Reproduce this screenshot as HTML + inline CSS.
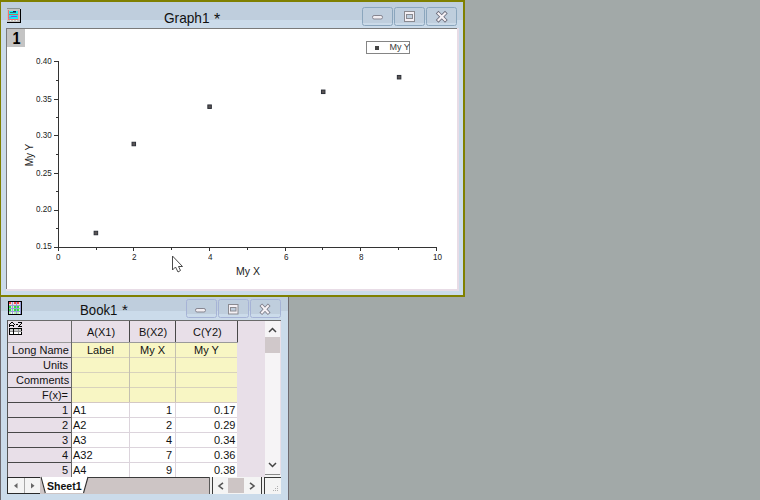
<!DOCTYPE html>
<html><head><meta charset="utf-8">
<style>
*{margin:0;padding:0;box-sizing:border-box}
html,body{width:760px;height:500px;overflow:hidden;background:#a2a9a8;font-family:"Liberation Sans",sans-serif;position:relative}
.a{position:absolute}
.t{position:absolute;white-space:nowrap;line-height:1}
</style></head><body>

<!-- ============ GRAPH WINDOW ============ -->
<div class="a" style="left:0;top:0;width:465px;height:297px;background:#808000"></div>
<div class="a" style="left:1px;top:2px;width:462px;height:293px;background:#cbdbea"></div>
<div class="a" style="left:1px;top:2px;width:462px;height:18px;background:#bfcedd"></div>
<!-- icon -->
<svg class="a" style="left:7px;top:8px" width="15" height="15" shape-rendering="crispEdges">
<rect x="0" y="0" width="13" height="14" fill="#c4c4c4"/>
<rect x="0" y="0" width="13" height="1" fill="#8a9494"/>
<rect x="1" y="2" width="1" height="10" fill="#f07070"/>
<rect x="1" y="11" width="11" height="1" fill="#f07070"/>
<rect x="11" y="2" width="1" height="10" fill="#e8a0a0"/>
<rect x="2" y="3" width="9" height="3" fill="#10f0f0"/>
<rect x="2" y="6" width="9" height="1" fill="#c07060"/>
<rect x="2" y="7" width="9" height="4" fill="#10f0f0"/>
<rect x="3" y="4" width="6" height="1" fill="#207878"/><rect x="6" y="3" width="3" height="1" fill="#102060"/>
<rect x="4" y="8" width="6" height="1" fill="#8040f0"/><rect x="2" y="9" width="2" height="1" fill="#a060f0"/>
<rect x="3" y="12" width="1" height="1" fill="#f8f8f8"/><rect x="6" y="12" width="1" height="1" fill="#f8f8e0"/><rect x="9" y="12" width="1" height="1" fill="#f8f8f8"/>
<rect x="13" y="1" width="1" height="14" fill="#000"/>
<rect x="0" y="14" width="14" height="1" fill="#000"/>
</svg>
<div class="t" style="left:164px;top:10px;font-size:15px;color:#101010;transform:scaleX(0.91);transform-origin:0 0">Graph1</div><div class="t" style="left:214px;top:11.5px;font-size:16px;color:#101010">*</div>
<!-- buttons -->
<svg class="a" style="left:0;top:0" width="465" height="30">
<rect x="363" y="8" width="29" height="15" fill="#bfcedd"/>
<rect x="395" y="8" width="29" height="15" fill="#bfcedd"/>
<rect x="427" y="8" width="29" height="15" fill="#bfcedd"/>
<rect x="363" y="23" width="29" height="2" fill="#cbdae8"/>
<rect x="395" y="23" width="29" height="2" fill="#cbdae8"/>
<rect x="427" y="23" width="29" height="2" fill="#cbdae8"/>
<g fill="none" stroke="#8ba6bd"><rect x="362.5" y="7.5" width="30" height="18" rx="2"/><rect x="394.5" y="7.5" width="30" height="18" rx="2"/><rect x="426.5" y="7.5" width="30" height="18" rx="2"/></g>
<rect x="372.5" y="15.5" width="10" height="3.5" rx="1.6" fill="#f2eef2" stroke="#858590"/>
<rect x="404.5" y="11.5" width="10" height="10" fill="#f4f0f4" stroke="#8a8a90"/>
<rect x="406.5" y="14.5" width="6" height="4" fill="#bfcedd" stroke="#8a8a90"/>
<path d="M438.5 13.5L445 20M445 13.5L438.5 20" stroke="#6a6a78" stroke-width="3.8" stroke-linecap="square"/>
<path d="M438.5 13.5L445 20M445 13.5L438.5 20" stroke="#f6f2f6" stroke-width="2.2" stroke-linecap="square"/>
</svg>

<!-- page -->
<div class="a" style="left:6px;top:28px;width:453px;height:263px;background:#e8dce6"></div>
<div class="a" style="left:6px;top:28px;width:451px;height:261px;background:#7a7a7a"></div>
<div class="a" style="left:7px;top:29px;width:450px;height:260px;background:#fff"></div>
<div class="a" style="left:7px;top:29px;width:18px;height:18px;background:#c4c4c4"></div>
<div class="t" style="left:12px;top:31px;font-size:16px;font-weight:bold;color:#000;transform:scaleX(0.9)">1</div>

<!-- plot -->
<svg class="a" style="left:0;top:0" width="465" height="297">
<g stroke="#333" stroke-width="1" shape-rendering="crispEdges">
<path d="M58.5 61V248M58 247.5H437"/>
<path d="M54 61.5H58M54 99.5H58M54 135.5H58M54 173.5H58M54 210.5H58M54 247.5H58"/>
<path d="M56 80.5H58M56 117.5H58M56 154.5H58M56 191.5H58M56 228.5H58"/>
<path d="M58.5 248V251M133.5 248V251M209.5 248V251M285.5 248V251M360.5 248V251M436.5 248V251"/>
<path d="M96.5 248V249.6M171.5 248V249.6M247.5 248V249.6M322.5 248V249.6M398.5 248V249.6"/>
</g>
<g fill="#5a5454" stroke="#2c3038" stroke-width="1"><rect x="94.15" y="231.25" width="3.5" height="3.5"/><rect x="132.05" y="142.25" width="3.5" height="3.5"/><rect x="207.85" y="104.95" width="3.5" height="3.5"/><rect x="321.45" y="90.05" width="3.5" height="3.5"/><rect x="397.35" y="75.45" width="3.5" height="3.5"/></g>
<rect x="366.5" y="41.5" width="43" height="12" fill="#fff" stroke="#858585"/>
<rect x="375" y="46" width="4" height="4" fill="#464646"/>
</svg>
<div class="t" style="left:389.5px;top:43px;font-size:9px;color:#3a3a3a">My Y</div>
<div class="t" style="left:36px;top:57px;font-size:9px;color:#222;transform:scaleX(0.9);transform-origin:0 0">0.40</div>
<div class="t" style="left:36px;top:94.5px;font-size:9px;color:#222;transform:scaleX(0.9);transform-origin:0 0">0.35</div>
<div class="t" style="left:36px;top:131px;font-size:9px;color:#222;transform:scaleX(0.9);transform-origin:0 0">0.30</div>
<div class="t" style="left:36px;top:169px;font-size:9px;color:#222;transform:scaleX(0.9);transform-origin:0 0">0.25</div>
<div class="t" style="left:36px;top:205px;font-size:9px;color:#222;transform:scaleX(0.9);transform-origin:0 0">0.20</div>
<div class="t" style="left:36px;top:242px;font-size:9px;color:#222;transform:scaleX(0.9);transform-origin:0 0">0.15</div>
<div class="t" style="left:55.5px;top:252.5px;font-size:9px;color:#222;transform:scaleX(0.9);transform-origin:0 0">0</div>
<div class="t" style="left:131.5px;top:252.5px;font-size:9px;color:#222;transform:scaleX(0.9);transform-origin:0 0">2</div>
<div class="t" style="left:207.5px;top:252.5px;font-size:9px;color:#222;transform:scaleX(0.9);transform-origin:0 0">4</div>
<div class="t" style="left:283.5px;top:252.5px;font-size:9px;color:#222;transform:scaleX(0.9);transform-origin:0 0">6</div>
<div class="t" style="left:359px;top:252.5px;font-size:9px;color:#222;transform:scaleX(0.9);transform-origin:0 0">8</div>
<div class="t" style="left:432.5px;top:252.5px;font-size:9px;color:#222;transform:scaleX(0.9);transform-origin:0 0">10</div>
<div class="t" style="left:236px;top:266px;font-size:10.5px;color:#222">My X</div>
<div class="t" style="left:19px;top:150px;font-size:10px;color:#222;transform:rotate(-90deg)">My Y</div>

<svg class="a" style="left:160px;top:250px" width="30" height="30"><path d="M12.5 6V20L15.5 17L18 22L20.5 20.5L18.5 16.5H22.5Z" fill="#fff" stroke="#4a4a4a" stroke-width="1" stroke-linejoin="miter"/></svg>

<!-- ============ BOOK WINDOW ============ -->
<div class="a" style="left:0;top:297px;width:289px;height:203px;background:#6e6a70"></div>
<div class="a" style="left:1px;top:297px;width:287px;height:203px;background:#cbdbea"></div>
<div class="a" style="left:1px;top:297px;width:287px;height:14px;background:#bfcedd"></div>
<div class="t" style="left:80px;top:302px;font-size:15px;color:#101010;transform:scaleX(0.88);transform-origin:0 0">Book1</div><div class="t" style="left:122px;top:302px;font-size:15px;color:#101010">*</div>


<!-- book icon -->
<svg class="a" style="left:8px;top:301px" width="15" height="15" shape-rendering="crispEdges"><rect x="0" y="0" width="14" height="14" fill="#000"/><rect x="1" y="1" width="12" height="12" fill="#98a0d8"/><rect x="1" y="1" width="3" height="3" fill="#f8d8d8"/><rect x="1" y="1" width="2" height="2" fill="#f04848"/><rect x="1" y="5" width="3" height="2" fill="#d0f4d0"/><rect x="1" y="5" width="2" height="2" fill="#30e040"/><rect x="1" y="8" width="3" height="2" fill="#d0f4d0"/><rect x="1" y="8" width="2" height="2" fill="#30e040"/><rect x="1" y="11" width="3" height="2" fill="#f0fcf0"/><rect x="1" y="11" width="2" height="2" fill="#b8f0b0"/><rect x="5" y="1" width="3" height="3" fill="#f8d8d8"/><rect x="6" y="1" width="2" height="2" fill="#f04848"/><rect x="5" y="5" width="3" height="2" fill="#d0f4d0"/><rect x="6" y="5" width="2" height="2" fill="#30e040"/><rect x="5" y="8" width="3" height="2" fill="#d0f4d0"/><rect x="6" y="8" width="2" height="2" fill="#30e040"/><rect x="5" y="11" width="3" height="2" fill="#f0fcf0"/><rect x="6" y="11" width="2" height="2" fill="#b8f0b0"/><rect x="9" y="1" width="3" height="3" fill="#f8d8d8"/><rect x="9" y="1" width="2" height="2" fill="#f04848"/><rect x="9" y="5" width="3" height="2" fill="#d0f4d0"/><rect x="9" y="5" width="2" height="2" fill="#30e040"/><rect x="9" y="8" width="3" height="2" fill="#d0f4d0"/><rect x="9" y="8" width="2" height="2" fill="#30e040"/><rect x="9" y="11" width="3" height="2" fill="#f0fcf0"/><rect x="9" y="11" width="2" height="2" fill="#b8f0b0"/><rect x="13" y="0" width="1" height="14" fill="#000"/></svg>
<!-- book buttons -->
<svg class="a" style="left:0;top:290px" width="289" height="30">
<rect x="187" y="10" width="29" height="14" fill="#bfcedd"/><rect x="219" y="10" width="29" height="14" fill="#bfcedd"/><rect x="251" y="10" width="29" height="14" fill="#bfcedd"/>
<g fill="none" stroke="#a6b3d6"><rect x="186.5" y="9.5" width="30" height="18" rx="2"/><rect x="218.5" y="9.5" width="30" height="18" rx="2"/><rect x="250.5" y="9.5" width="30" height="18" rx="2"/></g>
<rect x="195.5" y="18.5" width="10" height="3.5" rx="1.6" fill="#f2eef2" stroke="#858590"/>
<rect x="228.5" y="14.5" width="9.5" height="9.5" fill="#f4f0f4" stroke="#8a8a90"/>
<rect x="230.5" y="17.5" width="5.5" height="3.5" fill="#bfcedd" stroke="#8a8a90"/>
<path d="M262 16L268 22.5M268 16L262 22.5" stroke="#7a7a86" stroke-width="3.6" stroke-linecap="square"/>
<path d="M262 16L268 22.5M268 16L262 22.5" stroke="#f6f2f6" stroke-width="2" stroke-linecap="square"/>
</svg>

<!-- sheet area -->
<div class="a" style="left:7px;top:320px;width:274px;height:1px;background:#6a6a6a"></div>
<div class="a" style="left:7px;top:320px;width:1px;height:174px;background:#555"></div>
<div class="a" style="left:8px;top:321px;width:273px;height:156px;background:#e8dfe8"></div>
<!-- yellow metadata -->
<div class="a" style="left:72px;top:343px;width:165px;height:59px;background:#f8f6c4"></div>
<!-- white data -->
<div class="a" style="left:72px;top:403px;width:165px;height:74px;background:#fff"></div>
<svg class="a" style="left:0;top:0" width="289" height="500" shape-rendering="crispEdges">
<g stroke="#d8d2bc"><path d="M72 357.5H237M72 372.5H237M72 387.5H237"/></g>
<g stroke="#d4c8c4"><path d="M72 402.5H237"/></g>
<g stroke="#dcd4dc"><path d="M72 417.5H237M72 432.5H237M72 447.5H237M72 462.5H237M72 477.5H237"/></g>
<g stroke="#c4c0b0"><path d="M129.5 343V402M175.5 343V402"/></g>
<g stroke="#dcd4dc"><path d="M129.5 403V477M175.5 403V477"/></g>
<g stroke="#9a9a9a"><path d="M8 342.5H238"/></g><g stroke="#686868"><path d="M71.5 321V477"/></g><g stroke="#484848"><path d="M129.5 321V342M175.5 321V342M237.5 321V342"/>
<path d="M8 357.5H71M8 372.5H71M8 387.5H71M8 402.5H71M8 417.5H71M8 432.5H71M8 447.5H71M8 462.5H71M8 477.5H71"/></g>
</svg>
<!-- A-Z icon -->
<svg class="a" style="left:9px;top:322px" width="14" height="13" shape-rendering="crispEdges"><rect x="1" y="7" width="11" height="2" fill="#c8c8c8"/><rect x="1" y="10" width="11" height="2" fill="#fff"/><rect x="2" y="0" width="1" height="1" fill="#000"/><rect x="3" y="0" width="1" height="1" fill="#000"/><rect x="9" y="0" width="1" height="1" fill="#000"/><rect x="10" y="0" width="1" height="1" fill="#000"/><rect x="11" y="0" width="1" height="1" fill="#000"/><rect x="12" y="0" width="1" height="1" fill="#000"/><rect x="1" y="1" width="1" height="1" fill="#000"/><rect x="4" y="1" width="1" height="1" fill="#000"/><rect x="12" y="1" width="1" height="1" fill="#000"/><rect x="0" y="2" width="1" height="1" fill="#000"/><rect x="5" y="2" width="1" height="1" fill="#000"/><rect x="7" y="2" width="1" height="1" fill="#000"/><rect x="8" y="2" width="1" height="1" fill="#000"/><rect x="11" y="2" width="1" height="1" fill="#000"/><rect x="0" y="3" width="1" height="1" fill="#000"/><rect x="1" y="3" width="1" height="1" fill="#000"/><rect x="2" y="3" width="1" height="1" fill="#000"/><rect x="3" y="3" width="1" height="1" fill="#000"/><rect x="4" y="3" width="1" height="1" fill="#000"/><rect x="10" y="3" width="1" height="1" fill="#000"/><rect x="0" y="4" width="1" height="1" fill="#000"/><rect x="4" y="4" width="1" height="1" fill="#000"/><rect x="9" y="4" width="1" height="1" fill="#000"/><rect x="10" y="4" width="1" height="1" fill="#000"/><rect x="11" y="4" width="1" height="1" fill="#000"/><rect x="12" y="4" width="1" height="1" fill="#000"/><rect x="0" y="6" width="1" height="1" fill="#000"/><rect x="1" y="6" width="1" height="1" fill="#000"/><rect x="2" y="6" width="1" height="1" fill="#000"/><rect x="3" y="6" width="1" height="1" fill="#000"/><rect x="4" y="6" width="1" height="1" fill="#000"/><rect x="5" y="6" width="1" height="1" fill="#000"/><rect x="6" y="6" width="1" height="1" fill="#000"/><rect x="7" y="6" width="1" height="1" fill="#000"/><rect x="8" y="6" width="1" height="1" fill="#000"/><rect x="9" y="6" width="1" height="1" fill="#000"/><rect x="10" y="6" width="1" height="1" fill="#000"/><rect x="11" y="6" width="1" height="1" fill="#000"/><rect x="12" y="6" width="1" height="1" fill="#000"/><rect x="0" y="7" width="1" height="1" fill="#000"/><rect x="4" y="7" width="1" height="1" fill="#000"/><rect x="9" y="7" width="1" height="1" fill="#909090"/><rect x="12" y="7" width="1" height="1" fill="#000"/><rect x="0" y="8" width="1" height="1" fill="#000"/><rect x="4" y="8" width="1" height="1" fill="#000"/><rect x="9" y="8" width="1" height="1" fill="#909090"/><rect x="12" y="8" width="1" height="1" fill="#000"/><rect x="0" y="9" width="1" height="1" fill="#000"/><rect x="1" y="9" width="1" height="1" fill="#909090"/><rect x="2" y="9" width="1" height="1" fill="#909090"/><rect x="3" y="9" width="1" height="1" fill="#909090"/><rect x="4" y="9" width="1" height="1" fill="#000"/><rect x="5" y="9" width="1" height="1" fill="#909090"/><rect x="6" y="9" width="1" height="1" fill="#909090"/><rect x="7" y="9" width="1" height="1" fill="#909090"/><rect x="8" y="9" width="1" height="1" fill="#909090"/><rect x="9" y="9" width="1" height="1" fill="#909090"/><rect x="10" y="9" width="1" height="1" fill="#909090"/><rect x="11" y="9" width="1" height="1" fill="#909090"/><rect x="12" y="9" width="1" height="1" fill="#909090"/><rect x="0" y="10" width="1" height="1" fill="#000"/><rect x="4" y="10" width="1" height="1" fill="#000"/><rect x="9" y="10" width="1" height="1" fill="#909090"/><rect x="12" y="10" width="1" height="1" fill="#000"/><rect x="0" y="11" width="1" height="1" fill="#000"/><rect x="4" y="11" width="1" height="1" fill="#000"/><rect x="9" y="11" width="1" height="1" fill="#909090"/><rect x="12" y="11" width="1" height="1" fill="#000"/><rect x="0" y="12" width="1" height="1" fill="#000"/><rect x="1" y="12" width="1" height="1" fill="#000"/><rect x="2" y="12" width="1" height="1" fill="#000"/><rect x="3" y="12" width="1" height="1" fill="#000"/><rect x="4" y="12" width="1" height="1" fill="#000"/><rect x="5" y="12" width="1" height="1" fill="#000"/><rect x="6" y="12" width="1" height="1" fill="#000"/><rect x="7" y="12" width="1" height="1" fill="#000"/><rect x="8" y="12" width="1" height="1" fill="#000"/><rect x="9" y="12" width="1" height="1" fill="#000"/><rect x="10" y="12" width="1" height="1" fill="#000"/><rect x="11" y="12" width="1" height="1" fill="#000"/><rect x="12" y="12" width="1" height="1" fill="#000"/></svg>
<div class="t" style="left:87px;top:327px;font-size:11px;color:#111">A(X1)</div>
<div class="t" style="left:139px;top:327px;font-size:11px;color:#111">B(X2)</div>
<div class="t" style="left:193px;top:327px;font-size:11px;color:#111">C(Y2)</div>
<div class="t" style="left:12px;top:345px;font-size:11px;color:#111">Long Name</div>
<div class="t" style="left:43px;top:360px;font-size:11px;color:#111">Units</div>
<div class="t" style="left:16px;top:375px;font-size:11px;color:#111">Comments</div>
<div class="t" style="left:42px;top:390px;font-size:11px;color:#111">F(x)=</div>
<div class="t" style="left:87px;top:345px;font-size:11px;color:#111">Label</div>
<div class="t" style="left:140px;top:345px;font-size:11px;color:#111">My X</div>
<div class="t" style="left:194px;top:345px;font-size:11px;color:#111">My Y</div>
<div class="t" style="left:62px;top:405px;font-size:11px;color:#111">1</div>
<div class="t" style="left:62px;top:420px;font-size:11px;color:#111">2</div>
<div class="t" style="left:62px;top:435px;font-size:11px;color:#111">3</div>
<div class="t" style="left:62px;top:450px;font-size:11px;color:#111">4</div>
<div class="t" style="left:62px;top:465px;font-size:11px;color:#111">5</div>
<div class="t" style="left:73px;top:405px;font-size:11px;color:#111">A1</div>
<div class="t" style="left:73px;top:420px;font-size:11px;color:#111">A2</div>
<div class="t" style="left:73px;top:435px;font-size:11px;color:#111">A3</div>
<div class="t" style="left:73px;top:450px;font-size:11px;color:#111">A32</div>
<div class="t" style="left:73px;top:465px;font-size:11px;color:#111">A4</div>
<div class="t" style="left:166px;top:405px;font-size:11px;color:#111">1</div>
<div class="t" style="left:166px;top:420px;font-size:11px;color:#111">2</div>
<div class="t" style="left:166px;top:435px;font-size:11px;color:#111">4</div>
<div class="t" style="left:166px;top:450px;font-size:11px;color:#111">7</div>
<div class="t" style="left:166px;top:465px;font-size:11px;color:#111">9</div>
<div class="t" style="left:214px;top:405px;font-size:11px;color:#111">0.17</div>
<div class="t" style="left:214px;top:420px;font-size:11px;color:#111">0.29</div>
<div class="t" style="left:214px;top:435px;font-size:11px;color:#111">0.34</div>
<div class="t" style="left:214px;top:450px;font-size:11px;color:#111">0.36</div>
<div class="t" style="left:214px;top:465px;font-size:11px;color:#111">0.38</div>

<!-- vertical scrollbar -->
<div class="a" style="left:265px;top:321px;width:15px;height:153px;background:#f6f4f6"></div>
<div class="a" style="left:265px;top:474px;width:15px;height:1px;background:#8a8a8a"></div>
<div class="a" style="left:265px;top:475px;width:16px;height:2px;background:#f4f4f4"></div>
<div class="a" style="left:265px;top:337px;width:15px;height:16px;background:#d0c8ca"></div>
<svg class="a" style="left:265px;top:321px" width="15" height="153"><path d="M4 11L7.5 7.5L11 11" stroke="#444" stroke-width="1.5" fill="none"/><path d="M4 142L7.5 145.5L11 142" stroke="#444" stroke-width="1.5" fill="none"/></svg>
<!-- tab bar -->
<svg class="a" style="left:0;top:470px" width="289" height="30" shape-rendering="crispEdges">
<rect x="7" y="7" width="274" height="17" fill="#cbdbea"/>
<rect x="7" y="7" width="34" height="17" fill="#2a2a2a"/>
<rect x="8" y="8" width="16" height="15" fill="#f4f4f4"/>
<rect x="24" y="8" width="1" height="15" fill="#a8a8a8"/>
<rect x="25" y="8" width="15" height="15" fill="#f4f4f4"/>
<rect x="40" y="7" width="170" height="16.5" fill="#cdc5c5"/>
<rect x="40" y="7" width="170" height="1" fill="#3a3a3a"/>
<rect x="209" y="7" width="1" height="16.5" fill="#5a5a5a"/>
<rect x="210" y="7" width="2" height="16.5" fill="#f0f0f0"/>
<rect x="212" y="7" width="1" height="16.5" fill="#3a3a3a"/>
<rect x="213" y="7" width="48" height="16.5" fill="#f4f4f4"/>
<rect x="228" y="8" width="16" height="15" fill="#cdc5c5"/>
<rect x="261" y="7" width="1" height="16.5" fill="#3a3a3a"/>
<rect x="262" y="7" width="2" height="16.5" fill="#f0f0f0"/>
<rect x="264" y="7" width="1" height="16.5" fill="#3a3a3a"/>
<rect x="265" y="7" width="16" height="16.5" fill="#f4f4f4"/>
<rect x="264" y="7" width="17" height="1" fill="#3a3a3a"/>
<rect x="265" y="4" width="15" height="1" fill="#8a8a8a"/>
<rect x="265" y="5" width="16" height="2" fill="#f4f4f4"/>
</svg>
<svg class="a" style="left:0;top:470px" width="289" height="30">
<path d="M40 7H88L83.5 23H45Z" fill="#fff"/>
<path d="M41 7L45.3 23M88 7L83.5 23" stroke="#333" stroke-width="1.1"/>
<path d="M14 15.8L17.5 13V18.6Z" fill="#666"/>
<path d="M34.5 15.8L31 13V18.6Z" fill="#666"/>
<path d="M223 12.8L219 16L223 19.2" stroke="#555" stroke-width="1.6" fill="none"/>
<path d="M250 12.8L254 16L250 19.2" stroke="#555" stroke-width="1.6" fill="none"/>
<g fill="#b0b0b0"><rect x="277" y="16" width="1" height="1"/><rect x="277" y="18" width="1" height="1"/><rect x="277" y="20" width="1" height="1"/><rect x="275" y="18" width="1" height="1"/><rect x="275" y="20" width="1" height="1"/><rect x="273" y="20" width="1" height="1"/></g>
</svg>
<div class="t" style="left:47px;top:481px;font-size:11px;font-weight:bold;color:#111;transform:scaleX(0.96);transform-origin:0 0">Sheet1</div>
</body></html>
